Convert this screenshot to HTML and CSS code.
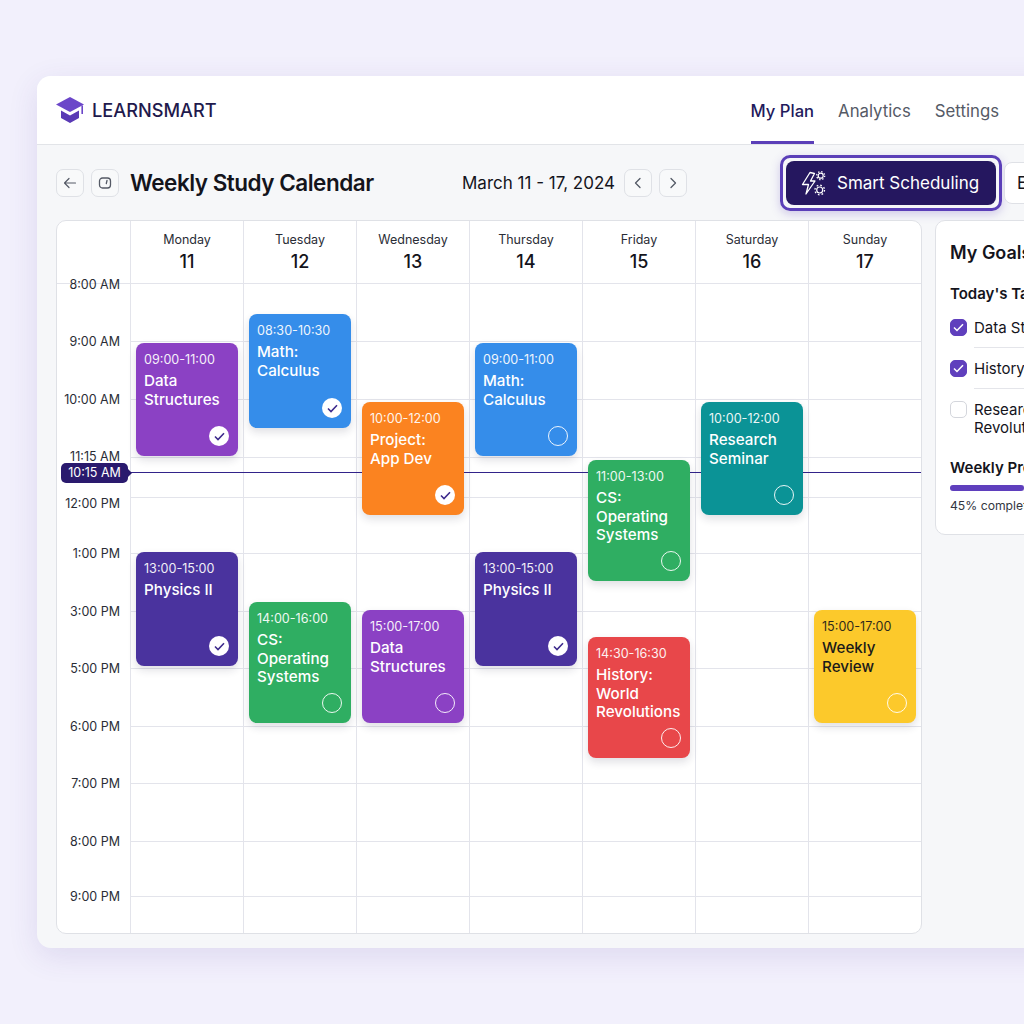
FILE: index.html
```html
<!DOCTYPE html>
<html lang="en">
<head>
    <meta charset="UTF-8">
    <meta name="viewport" content="width=device-width, initial-scale=1.0">
    <title>LearnSmart - Weekly Study Calendar</title>
    <link rel="stylesheet" href="styles.css">
</head>
<body>
    <div class="app">
        <header class="topbar">
            <div class="brand">
                <svg class="brand-icon" width="30" height="28" viewBox="0 0 30 28">
                    <path d="M15 1 L29 8.5 L15 16 L1 8.5 Z" fill="#6b46c9"/>
                    <path d="M6 14.5 L15 19.5 L24 14.5 V22 L15 27 L6 22 Z" fill="#5a3ab5"/>
                    <path d="M27.2 9.5 V18" stroke="#6b46c9" stroke-width="1.6" fill="none"/>
                </svg>
                <span class="brand-name">LEARNSMART</span>
            </div>
            <nav class="nav">
                <a class="nav-link active">My Plan</a>
                <a class="nav-link">Analytics</a>
                <a class="nav-link">Settings</a>
            </nav>
        </header>

        <main class="main">
            <div class="toolbar">
                <button class="icon-btn">
                    <svg width="14" height="14" viewBox="0 0 14 14" fill="none" stroke="#555a66" stroke-width="1.2" stroke-linecap="round" stroke-linejoin="round"><path d="M12.5 7 H1.5 M6 2.5 L1.5 7 L6 11.5"/></svg>
                </button>
                <button class="icon-btn">
                    <svg width="14" height="14" viewBox="0 0 14 14" fill="none" stroke="#555a66" stroke-width="1.3" stroke-linecap="round"><rect x="1.5" y="2" width="11" height="10" rx="3"/><path d="M9 4.5 L8.3 7.5"/></svg>
                </button>
                <h1 class="title">Weekly Study Calendar</h1>
                <span class="date-range">March 11 - 17, 2024</span>
                <button class="icon-btn date-prev">
                    <svg width="14" height="14" viewBox="0 0 14 14" fill="none" stroke="#555a66" stroke-width="1.3" stroke-linecap="round" stroke-linejoin="round"><path d="M9 2.5 L4.5 7 L9 11.5"/></svg>
                </button>
                <button class="icon-btn">
                    <svg width="14" height="14" viewBox="0 0 14 14" fill="none" stroke="#555a66" stroke-width="1.3" stroke-linecap="round" stroke-linejoin="round"><path d="M5 2.5 L9.5 7 L5 11.5"/></svg>
                </button>
                <div class="smart-ring">
                    <button class="smart-btn">
                        <svg width="26" height="26" viewBox="0 0 26 26" fill="none" stroke="#fff" stroke-width="1.3" stroke-linejoin="round">
                            <path d="M9 2.5 L1.5 14.5 H7.5 L5 24 L14 11 H9.5 L13.5 3.5 Z"/>
                            <circle cx="19.7" cy="5.7" r="2.5" stroke-width="1.2"/>
                            <circle cx="19.7" cy="5.7" r="4" stroke-width="1.3" stroke-dasharray="1.4 1.74"/>
                            <circle cx="18.7" cy="20" r="3" stroke-width="1.2"/>
                            <circle cx="18.7" cy="20" r="4.8" stroke-width="1.3" stroke-dasharray="1.7 2.07"/>
                        </svg>
                        Smart Scheduling
                    </button>
                </div>
                <button class="export-btn">Export</button>
            </div>

            <div class="content">
                <section class="calendar">
                    <div class="cal-head">
                        <div class="day-head"><span class="day-name">Monday</span><span class="day-num">11</span></div>
                        <div class="day-head"><span class="day-name">Tuesday</span><span class="day-num">12</span></div>
                        <div class="day-head"><span class="day-name">Wednesday</span><span class="day-num">13</span></div>
                        <div class="day-head"><span class="day-name">Thursday</span><span class="day-num">14</span></div>
                        <div class="day-head"><span class="day-name">Friday</span><span class="day-num">15</span></div>
                        <div class="day-head"><span class="day-name">Saturday</span><span class="day-num">16</span></div>
                        <div class="day-head"><span class="day-name">Sunday</span><span class="day-num">17</span></div>
                    </div>
                    <div class="cal-body">
                        <div class="hours">
                            <span>8:00 AM</span><span>9:00 AM</span><span>10:00 AM</span><span>11:15 AM</span>
                            <span>12:00 PM</span><span>1:00 PM</span><span>3:00 PM</span><span>5:00 PM</span>
                            <span>6:00 PM</span><span>7:00 PM</span><span>8:00 PM</span><span>9:00 PM</span>
                        </div>
                        <div class="lines">
                            <i></i><i></i><i></i><i></i><i></i><i></i><i></i><i></i><i></i><i></i><i></i>
                        </div>

                        <div class="days">
                            <div class="day">
                                <div class="event purple" style="top:59px;height:113px">
                                    <span class="event-time">09:00-11:00</span>
                                    <span class="event-name">Data Structures</span>
                                    <span class="status done"><svg width="11" height="9" viewBox="0 0 11 9"><path d="M1 4.5 L4 7.5 L10 1.2"/></svg></span>
                                </div>
                                <div class="event indigo" style="top:268px;height:114px">
                                    <span class="event-time">13:00-15:00</span>
                                    <span class="event-name">Physics II</span>
                                    <span class="status done"><svg width="11" height="9" viewBox="0 0 11 9"><path d="M1 4.5 L4 7.5 L10 1.2"/></svg></span>
                                </div>
                            </div>
                            <div class="day">
                                <div class="event blue" style="top:30px;height:114px">
                                    <span class="event-time">08:30-10:30</span>
                                    <span class="event-name">Math: Calculus</span>
                                    <span class="status done"><svg width="11" height="9" viewBox="0 0 11 9"><path d="M1 4.5 L4 7.5 L10 1.2"/></svg></span>
                                </div>
                                <div class="event green" style="top:318px;height:121px">
                                    <span class="event-time">14:00-16:00</span>
                                    <span class="event-name">CS: Operating Systems</span>
                                    <span class="status"></span>
                                </div>
                            </div>
                            <div class="day">
                                <div class="event orange" style="top:118px;height:113px">
                                    <span class="event-time">10:00-12:00</span>
                                    <span class="event-name">Project: App Dev</span>
                                    <span class="status done"><svg width="11" height="9" viewBox="0 0 11 9"><path d="M1 4.5 L4 7.5 L10 1.2"/></svg></span>
                                </div>
                                <div class="event purple" style="top:326px;height:113px">
                                    <span class="event-time">15:00-17:00</span>
                                    <span class="event-name">Data Structures</span>
                                    <span class="status"></span>
                                </div>
                            </div>
                            <div class="day">
                                <div class="event blue" style="top:59px;height:113px">
                                    <span class="event-time">09:00-11:00</span>
                                    <span class="event-name">Math: Calculus</span>
                                    <span class="status"></span>
                                </div>
                                <div class="event indigo" style="top:268px;height:114px">
                                    <span class="event-time">13:00-15:00</span>
                                    <span class="event-name">Physics II</span>
                                    <span class="status done"><svg width="11" height="9" viewBox="0 0 11 9"><path d="M1 4.5 L4 7.5 L10 1.2"/></svg></span>
                                </div>
                            </div>
                            <div class="day">
                                <div class="event green" style="top:176px;height:121px">
                                    <span class="event-time">11:00-13:00</span>
                                    <span class="event-name">CS: Operating Systems</span>
                                    <span class="status"></span>
                                </div>
                                <div class="event red" style="top:353px;height:121px">
                                    <span class="event-time">14:30-16:30</span>
                                    <span class="event-name">History: World Revolutions</span>
                                    <span class="status"></span>
                                </div>
                            </div>
                            <div class="day">
                                <div class="event teal" style="top:118px;height:113px">
                                    <span class="event-time">10:00-12:00</span>
                                    <span class="event-name">Research Seminar</span>
                                    <span class="status"></span>
                                </div>
                            </div>
                            <div class="day">
                                <div class="event yellow" style="top:326px;height:113px">
                                    <span class="event-time">15:00-17:00</span>
                                    <span class="event-name">Weekly Review</span>
                                    <span class="status"></span>
                                </div>
                            </div>
                        </div>

                        <div class="now-line"></div>
                        <div class="now-tag">10:15 AM</div>
                    </div>
                </section>

                <aside class="goals">
                    <h2 class="goals-title">My Goals</h2>
                    <h3 class="goals-sub">Today's Tasks</h3>
                    <ul class="tasks">
                        <li class="task">
                            <span class="box checked"><svg width="11" height="9" viewBox="0 0 11 9"><path d="M1 4.5 L4 7.5 L10 1.2"/></svg></span>
                            <span class="task-text">Data Structures review</span>
                        </li>
                        <li class="task">
                            <span class="box checked"><svg width="11" height="9" viewBox="0 0 11 9"><path d="M1 4.5 L4 7.5 L10 1.2"/></svg></span>
                            <span class="task-text">History reading</span>
                        </li>
                        <li class="task">
                            <span class="box"></span>
                            <span class="task-text">Research World<br>Revolutions</span>
                        </li>
                    </ul>
                    <h3 class="progress-title">Weekly Progress</h3>
                    <div class="progress"><div class="progress-fill" style="width:45%"></div></div>
                    <p class="progress-note">45% complete this week</p>
                </aside>
            </div>
        </main>
    </div>
</body>
</html>
```

FILE: styles.css
```css
* {
    box-sizing: border-box;
}
body {
    margin: 0;
    height: 1024px;
    overflow: hidden;
    padding: 76px 0 0 37px;
    background: #f2f0fc;
    font-family: Inter, "Liberation Sans", sans-serif;
    color: #14141c;
}
.app {
    width: 1120px;
    height: 872px;
    background: #f6f7f9;
    border-radius: 14px 0 0 14px;
    box-shadow: 0 8px 30px rgba(70, 50, 150, 0.12);
    overflow: hidden;
}

/* top bar */
.topbar {
    display: flex;
    align-items: center;
    height: 69px;
    padding-left: 18px;
    background: #fff;
    border-bottom: 1px solid #e2e4e8;
}
.brand {
    display: flex;
    align-items: center;
    gap: 7px;
}
.brand-name {
    font-size: 18.2px;
    font-weight: 500;
    color: #1f1a4d;
}
.nav {
    display: flex;
    align-self: stretch;
    gap: 24px;
    margin-left: 534px;
}
.nav-link {
    display: flex;
    align-items: center;
    padding-top: 4px;
    font-size: 16.8px;
    color: #555a66;
    border-bottom: 3px solid transparent;
}
.nav-link.active {
    color: #221a5c;
    font-size: 16.6px;
    font-weight: 500;
    border-bottom-color: #5b3fb8;
}

/* toolbar */
.main {
    padding: 9px 0 0 19px;
}
.toolbar {
    display: flex;
    align-items: center;
    height: 57px;
    margin-bottom: 9px;
}
.icon-btn {
    display: flex;
    align-items: center;
    justify-content: center;
    width: 28px;
    height: 28px;
    margin-right: 7px;
    padding: 0;
    background: #f8f9fa;
    border: 1px solid #dfe1e6;
    border-radius: 7px;
}
.title {
    margin: 0 0 0 4px;
    width: 332px;
    font-size: 22.5px;
    font-weight: 600;
    letter-spacing: -0.5px;
    color: #14141c;
}
.date-range {
    width: 162px;
    font-size: 17px;
    white-space: nowrap;
}
.date-prev + .icon-btn {
    margin-right: 0;
}
.smart-ring {
    margin-left: 93px;
    padding: 3px;
    border: 3px solid #5b3fb8;
    border-radius: 10px;
    box-shadow: 0 3px 10px rgba(91, 63, 184, 0.25);
}
.smart-btn {
    display: flex;
    align-items: center;
    gap: 10px;
    width: 210px;
    height: 44px;
    padding: 0 0 0 15px;
    background: #25175f;
    color: #fff;
    border: 0;
    border-radius: 8px;
    font-family: inherit;
    font-size: 17px;
    white-space: nowrap;
}
.export-btn {
    flex: none;
    width: 90px;
    height: 42px;
    margin-left: 2px;
    padding: 0 0 0 12px;
    text-align: left;
    background: #fff;
    border: 1px solid #dfe1e6;
    border-radius: 8px;
    font-family: inherit;
    font-size: 17px;
    color: #14141c;
}

/* calendar */
.content {
    display: flex;
    align-items: flex-start;
    gap: 13px;
}
.calendar {
    flex: none;
    width: 866px;
    height: 714px;
    background: #fff;
    border: 1px solid #dfe1e6;
    border-radius: 10px;
    overflow: hidden;
}
.cal-head {
    display: grid;
    grid-template-columns: repeat(7, 113px);
    height: 63px;
    padding-left: 73px;
    border-bottom: 1px solid #e3e4eb;
}
.day-head {
    display: flex;
    flex-direction: column;
    align-items: center;
    padding-top: 11px;
    border-left: 1px solid #e3e4eb;
}
.day-name {
    font-size: 12.5px;
    line-height: 16px;
    color: #2a2d36;
}
.day-num {
    margin-top: 3px;
    font-size: 18px;
    font-weight: 500;
    line-height: 22px;
}
.cal-body {
    position: relative;
    display: grid;
    grid-template-columns: 73px repeat(7, 113px);
    grid-template-rows: 649px;
}
.hours {
    display: grid;
    grid-template-rows: 57px 58px 57px 47px 50px 58px 57px 58px 57px 58px 55px 16px;
    grid-row: 1;
    grid-column: 1;
    padding-right: 10px;
    text-align: right;
    font-size: 12.5px;
    line-height: 16px;
    color: #2a2d36;
}
.hours span {
    transform: translateY(-7px);
}
.lines {
    display: grid;
    grid-template-rows: 58px 58px 58px 40px 56px 58px 57px 58px 57px 58px 55px;
    grid-row: 1;
    grid-column: 2 / 9;
}
.lines i {
    border-bottom: 1px solid #e3e4eb;
}
.days {
    display: grid;
    grid-template-columns: repeat(7, 113px);
    grid-row: 1;
    grid-column: 2 / 9;
}
.day {
    position: relative;
    border-left: 1px solid #e3e4eb;
}
.event {
    position: absolute;
    left: 5px;
    width: 102px;
    z-index: 2;
    padding: 8px 8px;
    border-radius: 8px;
    color: #fff;
    box-shadow: 0 4px 8px rgba(30, 30, 60, 0.14);
}
.event-time {
    display: block;
    font-size: 12.6px;
    line-height: 18px;
    opacity: 0.92;
}
.event-name {
    display: block;
    margin-top: 3px;
    font-size: 15.2px;
    font-weight: 450;
    line-height: 18.5px;
}
.status {
    position: absolute;
    right: 9px;
    bottom: 10px;
    width: 20px;
    height: 20px;
    border: 1.2px solid rgba(255, 255, 255, 0.9);
    border-radius: 50%;
}
.status.done {
    display: flex;
    align-items: center;
    justify-content: center;
    background: #fff;
    border: 0;
}
.status svg path {
    fill: none;
    stroke: #3d2a8c;
    stroke-width: 1.6;
}
.purple { background: #8b41c4; }
.blue { background: #358dea; }
.orange { background: #fb8320; }
.indigo { background: #4a339e; }
.green { background: #2fae62; }
.teal { background: #0b9396; }
.red { background: #e8474a; }
.yellow { background: #fcc92b; color: #1a1a1a; }
.now-line {
    position: absolute;
    top: 188px;
    left: 73px;
    right: 0;
    height: 1px;
    background: #32238a;
    z-index: 1;
}
.now-tag {
    position: absolute;
    top: 179px;
    left: 4px;
    width: 67px;
    height: 20px;
    z-index: 3;
    background: #2a1a6e;
    color: #fff;
    border-radius: 5px;
    font-size: 12.5px;
    line-height: 20px;
    text-align: center;
}
.now-tag::after {
    content: "";
    position: absolute;
    top: 6px;
    right: -4px;
    border-left: 4px solid #2a1a6e;
    border-top: 4px solid transparent;
    border-bottom: 4px solid transparent;
}

/* goals panel */
.goals {
    flex: none;
    width: 190px;
    height: 315px;
    padding: 21px 14px 0;
    background: #fff;
    border: 1px solid #dfe1e6;
    border-radius: 10px;
    white-space: nowrap;
}
.goals-title {
    margin: 0;
    font-size: 18px;
    font-weight: 600;
    line-height: 22px;
}
.goals-sub {
    margin: 21px 0 0;
    font-size: 15px;
    font-weight: 600;
    line-height: 18px;
}
.tasks {
    margin: 16px 0 0;
    padding: 0;
    list-style: none;
}
.task {
    display: flex;
    gap: 7px;
    font-size: 15px;
    line-height: 18px;
}
.task-text {
    flex: 1;
    padding-bottom: 10px;
    margin-bottom: 12px;
    border-bottom: 1px solid #e4e5ea;
}
.task:last-child .task-text {
    border-bottom: 0;
    padding-bottom: 0;
    margin-bottom: 0;
}
.box {
    display: flex;
    flex: none;
    align-items: center;
    justify-content: center;
    width: 17px;
    height: 17px;
    background: #fff;
    border: 1px solid #d4d6dc;
    border-radius: 5px;
}
.box.checked {
    background: #5f3fbd;
    border-color: #5f3fbd;
}
.box svg path {
    fill: none;
    stroke: #fff;
    stroke-width: 1.5;
}
.progress-title {
    margin: 22px 0 0;
    font-size: 15px;
    font-weight: 600;
    line-height: 18px;
}
.progress {
    width: 164px;
    height: 6px;
    margin-top: 8px;
    background: #e8e8f0;
    border-radius: 3px;
}
.progress-fill {
    height: 6px;
    background: #5f3fbd;
    border-radius: 3px;
}
.progress-note {
    margin: 6px 0 0;
    font-size: 12.2px;
    line-height: 18px;
    color: #33363f;
}
```
